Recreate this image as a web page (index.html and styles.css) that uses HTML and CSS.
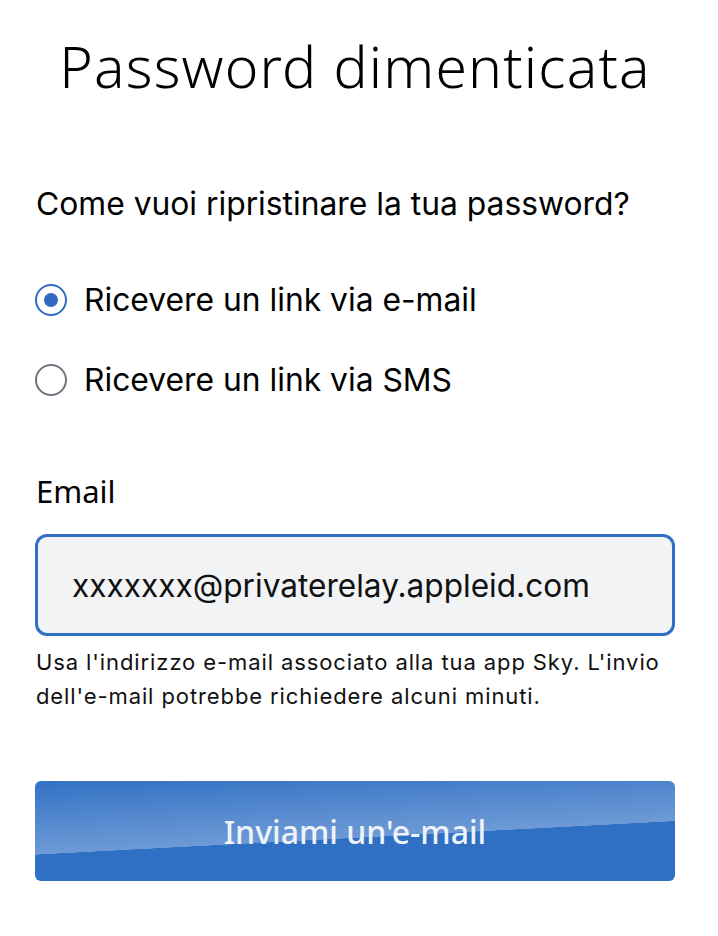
FILE: index.html
```html
<!DOCTYPE html>
<html lang="it">
  <head>
    <meta charset="UTF-8" />
    <meta name="viewport" content="width=device-width, initial-scale=1.0" />
    <title>Password dimenticata</title>
    <link rel="stylesheet" href="styles.css">
  </head>
  <body>
    <div class="container">
      <h1>Password dimenticata</h1>

      <p class="question">Come vuoi ripristinare la tua password?</p>

      <div class="options">
        <label class="radio">
          <input type="radio" name="method" value="email" checked />
          <span class="mark"></span>
          <span>Ricevere un link via e-mail</span>
        </label>
        <label class="radio">
          <input type="radio" name="method" value="sms" />
          <span class="mark"></span>
          <span>Ricevere un link via SMS</span>
        </label>
      </div>

      <div class="field">
        <label for="email">Email</label>
        <input type="text" id="email" value="xxxxxxx@privaterelay.appleid.com" />
        <p class="hint">Usa l'indirizzo e-mail associato alla tua app Sky. L'invio dell'e-mail potrebbe richiedere alcuni minuti.</p>
      </div>

      <button class="submit">Inviami un'e-mail</button>
    </div>
  </body>
</html>
```

FILE: styles.css
```css
body {
  font-family: Inter, "Liberation Sans", sans-serif;
  margin: 0;
  padding: 0;
  background: #fff;
  color: #000;
}
.container {
  width: 640px;
  margin-left: 35px;
  padding-top: 26px;
}
h1 {
  font-family: "Noto Sans", sans-serif;
  font-weight: 300;
  font-size: 57px;
  letter-spacing: 1.2px;
  line-height: 80px;
  text-align: center;
  margin: 0;
}
.question {
  font-size: 31.8px;
  line-height: 40px;
  margin: 78px 0 0 1px;
}
.options {
  margin-top: 60px;
  display: flex;
  flex-direction: column;
  gap: 48px;
}
.radio {
  display: flex;
  align-items: center;
  gap: 17px;
  font-size: 31.8px;
  line-height: 32px;
  cursor: pointer;
}
.radio input {
  display: none;
}
.mark {
  width: 28px;
  height: 28px;
  border: 2px solid #6e7380;
  border-radius: 50%;
  position: relative;
  flex-shrink: 0;
}
.radio input:checked + .mark {
  border-color: #2f6cc0;
}
.radio input:checked + .mark:before {
  content: "";
  position: absolute;
  left: 7px;
  top: 7px;
  width: 14px;
  height: 14px;
  border-radius: 50%;
  background: #2f6cc0;
}
.field {
  margin-top: 75px;
}
.field label {
  display: block;
  font-family: "Noto Sans", sans-serif;
  font-size: 31px;
  line-height: 40px;
  margin-left: 1px;
}
.field input {
  display: block;
  box-sizing: border-box;
  width: 640px;
  height: 102px;
  margin-top: 23px;
  padding: 0 34px;
  border: 3px solid #2f6fc4;
  border-radius: 12px;
  background: #f2f3f5;
  font-family: Inter, sans-serif;
  font-size: 31.6px;
  color: #111;
  outline: none;
}
.hint {
  font-size: 22px;
  letter-spacing: 0.9px;
  line-height: 34px;
  margin: 9px 0 0 1px;
  color: #111;
}
.submit {
  display: block;
  width: 640px;
  height: 100px;
  margin-top: 68px;
  border: none;
  border-radius: 6px;
  color: #eef3fa;
  font-family: "Noto Sans", sans-serif;
  font-weight: 500;
  font-size: 32px;
  cursor: pointer;
  background:
    linear-gradient(177deg, rgba(255, 255, 255, 0.02) 0%, rgba(255, 255, 255, 0.3) 55%, rgba(255, 255, 255, 0) 55.3%),
    #2f6fc4;
}
```
